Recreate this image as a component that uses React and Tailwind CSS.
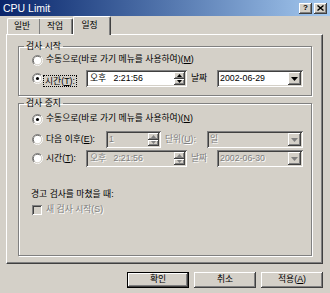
import React from "react";

const RAISED =
  "shadow-[inset_-1px_-1px_#404040,inset_1px_1px_#ffffff,inset_-2px_-2px_#808080,inset_2px_2px_#d4d0c8]";
const SUNKEN =
  "shadow-[inset_1px_1px_#808080,inset_-1px_-1px_#ffffff,inset_2px_2px_#404040,inset_-2px_-2px_#d4d0c8]";
const DIM = "text-[#808080] [text-shadow:1px_1px_0_#ffffff]";

function Radio({ checked, disabled }) {
  return (
    <svg width="11" height="11" viewBox="0 0 12 12" className="shrink-0">
      <path d="M2.11 9.89A5.5 5.5 0 0 1 9.89 2.11" stroke="#808080" fill="none" />
      <path d="M9.89 2.11A5.5 5.5 0 0 1 2.11 9.89" stroke="#ffffff" fill="none" />
      <path d="M2.82 9.18A4.5 4.5 0 0 1 9.18 2.82" stroke="#404040" fill="none" />
      <path d="M9.18 2.82A4.5 4.5 0 0 1 2.82 9.18" stroke="#d4d0c8" fill="none" />
      <circle cx="6" cy="6" r="4" fill={disabled ? "#d4d0c8" : "#ffffff"} />
      {checked && <circle cx="6" cy="6" r="1.7" fill="#000000" />}
    </svg>
  );
}

function Spin({ disabled }) {
  const c = disabled ? "#808080" : "#000000";
  return (
    <div className="flex flex-col w-[11px] h-[13px] shrink-0">
      <div className={`flex-1 bg-[#d4d0c8] flex items-center justify-center ${RAISED}`}>
        <svg width="5" height="3">
          <path d="M0 3h5L2.5 0z" fill={c} />
        </svg>
      </div>
      <div className={`flex-1 bg-[#d4d0c8] flex items-center justify-center ${RAISED}`}>
        <svg width="5" height="3">
          <path d="M0 0h5L2.5 3z" fill={c} />
        </svg>
      </div>
    </div>
  );
}

function DropBtn({ disabled }) {
  return (
    <div className={`w-[13px] h-[13px] shrink-0 bg-[#d4d0c8] flex items-center justify-center ${RAISED}`}>
      <svg width="7" height="4">
        <path d="M0 0h7L3.5 4z" fill={disabled ? "#808080" : "#000000"} />
      </svg>
    </div>
  );
}

function TimeField({ disabled }) {
  return (
    <div
      className={`w-[101px] h-[17px] shrink-0 flex items-center justify-between pl-[4px] pr-[2px] ${SUNKEN} ${
        disabled ? "bg-[#d4d0c8]" : "bg-white"
      }`}
    >
      <span className={`text-[8.8px] ${disabled ? DIM : "text-black"}`}>
        오후&nbsp;&nbsp;&nbsp;2:21:56
      </span>
      <Spin disabled={disabled} />
    </div>
  );
}

function Combo({ value, width, disabled }) {
  return (
    <div
      className={`${width} h-[17px] shrink-0 flex items-center justify-between pl-[3px] pr-[2px] ${SUNKEN} ${
        disabled ? "bg-[#d4d0c8]" : "bg-white"
      }`}
    >
      <span className={`text-[8.8px] ${disabled ? DIM : "text-black"}`}>{value}</span>
      <DropBtn disabled={disabled} />
    </div>
  );
}

function Button({ children, def }) {
  return (
    <div
      className={`h-[16px] flex items-center justify-center bg-[#d4d0c8] ${
        def
          ? "w-[62px] border border-black shadow-[inset_-1px_-1px_#404040,inset_1px_1px_#ffffff,inset_-2px_-2px_#808080]"
          : `w-[62px] ${RAISED}`
      }`}
    >
      <span className="text-[8.8px] text-black">{children}</span>
    </div>
  );
}

export default function App() {
  return (
    <div className="w-[330px] h-[293px] bg-[#d4d0c8] flex flex-col overflow-hidden font-['Liberation_Sans','Noto_Sans_CJK_KR',sans-serif] text-black">
      {/* title bar */}
      <div className="h-[16px] flex items-center justify-between pl-[3px] pr-[3px] bg-linear-to-r from-[#0a246a] to-[#a6caf0]">
        <span className="text-white text-[10.5px] leading-none">CPU Limit</span>
        <div className="flex gap-[2px]">
          <div className={`w-[13px] h-[11px] bg-[#d4d0c8] flex items-center justify-center ${RAISED}`}>
            <span className="text-[8px] font-bold leading-none">?</span>
          </div>
          <div className={`w-[13px] h-[11px] bg-[#d4d0c8] flex items-center justify-center ${RAISED}`}>
            <svg width="7" height="6">
              <path d="M0.5 0.5L6.5 5.5M6.5 0.5L0.5 5.5" stroke="#000" strokeWidth="1.4" />
            </svg>
          </div>
        </div>
      </div>

      {/* tabs */}
      <div className="h-[18px] flex items-end pl-[7px]">
        <div className="w-[33px] h-[16px] flex items-center justify-center pr-[4px] border-l border-t border-white rounded-tl-[2px] shadow-[inset_-1px_0_#808080]">
          <span className="text-[8.8px]">일반</span>
        </div>
        <div className="w-[33px] h-[16px] flex items-center justify-center pr-[2px] border-t border-r border-white border-r-[#404040] rounded-tr-[2px] shadow-[inset_-1px_0_#808080]">
          <span className="text-[8.8px]">작업</span>
        </div>
        <div className="relative z-10 -mb-px w-[38px] h-[19px] flex items-center justify-center pr-[5px] bg-[#d4d0c8] border-l border-t border-r border-white border-r-[#404040] rounded-t-[2px] shadow-[inset_-1px_0_#808080]">
          <span className="text-[8.8px]">일정</span>
        </div>
      </div>

      {/* tab panel */}
      <div className="ml-[6px] w-[317px] h-[230px] border-l border-t border-white border-r border-b border-r-[#404040] border-b-[#404040] shadow-[inset_-1px_-1px_#808080] pt-[5px] pl-[11px]">
        <fieldset className="w-[294px] h-[56px] border border-[#808080] shadow-[inset_1px_1px_#ffffff,1px_1px_#ffffff] pl-[13px]">
          <legend className="-ml-[8px] px-[2px] text-[8.8px] leading-[12px]">검사 시작</legend>
          <div className="h-[16px] flex items-center gap-[3px]">
            <Radio />
            <span className="text-[8.8px]">
              수동으로(바로 가기 메뉴를 사용하여)(<u>M</u>)
            </span>
          </div>
          <div className="mt-[2px] h-[17px] flex items-center">
            <Radio checked />
            <div className="w-[43px] shrink-0 pl-[1px]">
              <span className="text-[8.8px] outline outline-dotted outline-black px-[1px]">
                시간(<u>T</u>):
              </span>
            </div>
            <TimeField />
            <span className="w-[30px] pl-[4px] text-[8.8px] shrink-0">날짜</span>
            <Combo value="2002-06-29" width="w-[86px]" />
          </div>
        </fieldset>

        <fieldset className="mt-[1px] w-[294px] h-[159px] border border-[#808080] shadow-[inset_1px_1px_#ffffff,1px_1px_#ffffff] pl-[13px]">
          <legend className="-ml-[8px] px-[2px] text-[8.8px] leading-[12px]">검사 중지</legend>
          <div className="mt-[2px] h-[16px] flex items-center gap-[3px]">
            <Radio checked />
            <span className="text-[8.8px]">
              수동으로(바로 가기 메뉴를 사용하여)(<u>N</u>)
            </span>
          </div>
          <div className="mt-[4px] h-[17px] flex items-center">
            <Radio />
            <span className="w-[63px] shrink-0 pl-[3px] text-[8.8px]">
              다음 이후(<u>E</u>):
            </span>
            <div className={`w-[55px] h-[17px] shrink-0 flex items-center justify-between pl-[3px] pr-[2px] bg-[#d4d0c8] ${SUNKEN}`}>
              <span className={`text-[8.8px] ${DIM}`}>1</span>
              <Spin disabled />
            </div>
            <span className={`w-[46px] shrink-0 pl-[4px] text-[8.8px] ${DIM}`}>
              단위(<u>U</u>):
            </span>
            <Combo value="일" width="w-[96px]" disabled />
          </div>
          <div className="mt-[2px] h-[17px] flex items-center">
            <Radio />
            <span className="w-[43px] shrink-0 pl-[3px] text-[8.8px]">
              시간(<u>T</u>):
            </span>
            <TimeField disabled />
            <span className={`w-[30px] pl-[4px] text-[8.8px] shrink-0 ${DIM}`}>날짜</span>
            <Combo value="2002-06-30" width="w-[86px]" disabled />
          </div>
          <div className="mt-[22px] -ml-[1px] h-[12px] flex items-center">
            <span className="text-[8.8px]">경고 검사를 마쳤을 때:</span>
          </div>
          <div className="mt-[2px] h-[14px] flex items-center gap-[4px]">
            <div className={`w-[10px] h-[10px] bg-[#d4d0c8] ${SUNKEN}`} />
            <span className={`text-[8.8px] ${DIM}`}>새 검사 시작(S)</span>
          </div>
        </fieldset>
      </div>

      {/* buttons */}
      <div className="mt-[8px] h-[16px] flex justify-end gap-[5px] pr-[7px]">
        <Button def>확인</Button>
        <Button>취소</Button>
        <Button>
          적용(<u>A</u>)
        </Button>
      </div>
    </div>
  );
}
